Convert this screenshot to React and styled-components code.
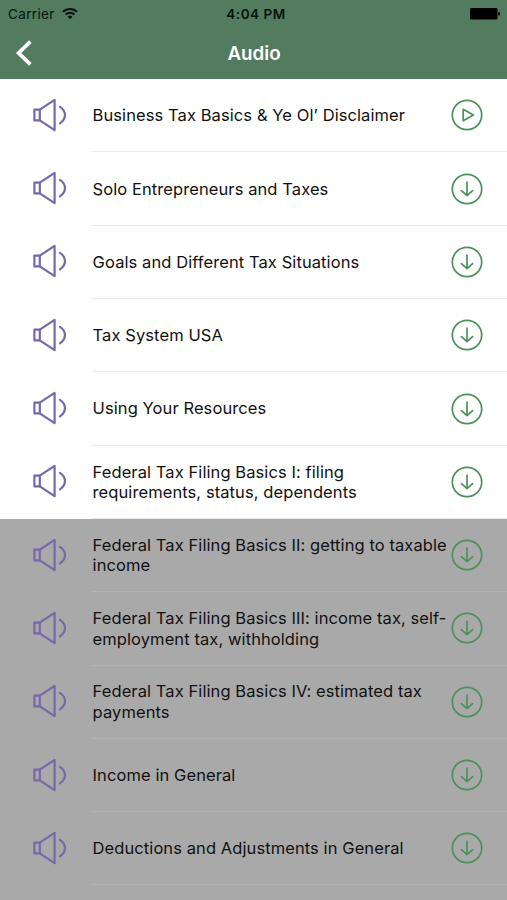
import styled, { createGlobalStyle } from "styled-components";

const GlobalStyle = createGlobalStyle`
  * {
    box-sizing: border-box;
  }

  body {
    margin: 0;
    background: #fff;
    font-family: Inter, "Liberation Sans", sans-serif;
    overflow: hidden;
  }
`;

const Screen = styled.div`
  width: 507px;
  height: 900px;
  overflow: hidden;
`;

const Header = styled.header`
  height: 79.2px;
  background: #527b5f;
`;

const StatusBar = styled.div`
  display: grid;
  grid-template-columns: 1fr auto 1fr;
  align-items: center;
  height: 27px;
  padding: 0 7px 0 8px;
  color: #07140c;
  font-size: 13.5px;
`;

const Carrier = styled.div`
  display: flex;
  align-items: center;
  gap: 7px;
  letter-spacing: 0.35px;
`;

const Clock = styled.div`
  padding-left: 4px;
  font-weight: 600;
  letter-spacing: 0.5px;
`;

const Battery = styled.svg`
  justify-self: end;
`;

const NavBar = styled.div`
  display: grid;
  grid-template-columns: 61px 1fr 60px;
  align-items: center;
  height: 52px;
`;

const BackButton = styled.button`
  display: flex;
  padding: 0 0 0 15px;
  border: 0;
  background: none;
`;

const Title = styled.h1`
  margin: 0;
  color: #fff;
  font-size: 18.8px;
  font-weight: 600;
  text-align: center;
`;

const List = styled.ul`
  margin: 0;
  padding: 0;
  list-style: none;
`;

const Row = styled.li`
  display: flex;
  height: 73.3px;
  padding-left: 32px;
  background: ${(p) => (p.$dimmed ? "#a9a9a9" : "#fff")};
`;

const SpeakerCell = styled.div`
  display: flex;
  align-items: center;
  width: 60px;
  flex-shrink: 0;
  padding-bottom: 2px;
`;

const Content = styled.div`
  display: flex;
  align-items: center;
  flex-grow: 1;
  padding-right: 23px;
  border-bottom: 1px solid ${(p) => (p.$dimmed ? "#b2b2b2" : "#e9e9e9")};
`;

const Name = styled.div`
  width: 359px;
  flex-shrink: 0;
  padding-top: 0.3px;
  padding-left: 0.6px;
  color: #111;
  font-size: 16.5px;
  letter-spacing: 0.085px;
  line-height: 20.4px;
  white-space: pre;
`;

const tracks = [
  { name: "Business Tax Basics & Ye Ol’ Disclaimer", downloaded: true },
  { name: "Solo Entrepreneurs and Taxes" },
  { name: "Goals and Different Tax Situations" },
  { name: "Tax System USA" },
  { name: "Using Your Resources" },
  { name: "Federal Tax Filing Basics I: filing\nrequirements, status, dependents" },
  { name: "Federal Tax Filing Basics II: getting to taxable\nincome", dimmed: true },
  { name: "Federal Tax Filing Basics III: income tax, self-\nemployment tax, withholding", dimmed: true },
  { name: "Federal Tax Filing Basics IV: estimated tax\npayments", dimmed: true },
  { name: "Income in General", dimmed: true },
  { name: "Deductions and Adjustments in General", dimmed: true },
  { name: "", dimmed: true, empty: true },
];

function WifiIcon() {
  return (
    <svg width="16" height="12" viewBox="0 0 16 12" fill="none" stroke="#07140c" strokeWidth="1.9">
      <path d="M1 3.8a10 10 0 0 1 14 0" />
      <path d="M3.6 6.5a6.3 6.3 0 0 1 8.8 0" />
      <path d="M8 11.1 5.6 8.7a3.5 3.5 0 0 1 4.8 0z" fill="#07140c" stroke="none" />
    </svg>
  );
}

function SpeakerIcon({ dimmed }) {
  return (
    <svg
      width="36"
      height="36"
      viewBox="0 0 36 36"
      fill="none"
      stroke={dimmed ? "#7768a8" : "#7668ad"}
      strokeWidth="2.2"
      strokeLinejoin="round"
      strokeLinecap="round"
    >
      <path d="M2.4 12.6H7.8V23.4H2.4z" />
      <path d="M7.8 12.6 22.6 2.8V33.2L7.8 23.4" />
      <path d="M28 9.8c6.6 4.4 6.6 12.2 0 16.6" />
    </svg>
  );
}

function ActionIcon({ downloaded }) {
  return (
    <svg
      width="32"
      height="32"
      viewBox="0 0 32 32"
      fill="none"
      stroke="#4b915a"
      strokeWidth="1.7"
      strokeLinejoin="round"
      strokeLinecap="round"
    >
      <circle cx="16" cy="16" r="14.7" />
      {downloaded ? (
        <path d="M12.2 10.2V21.8L22.4 16z" />
      ) : (
        <path d="M16 9V22.6M10.4 17.6 16 22.6 21.6 17.6" />
      )}
    </svg>
  );
}

export default function App() {
  return (
    <Screen>
      <GlobalStyle />
      <Header>
        <StatusBar>
          <Carrier>
            Carrier
            <WifiIcon />
          </Carrier>
          <Clock>4:04 PM</Clock>
          <Battery width="30" height="12" viewBox="0 0 30 12">
            <rect width="27.5" height="11.5" rx="1.5" />
            <rect x="28" y="4" width="2" height="3.6" rx="1" />
          </Battery>
        </StatusBar>
        <NavBar>
          <BackButton aria-label="Back">
            <svg width="18" height="26" viewBox="0 0 18 26" fill="none" stroke="#fff" strokeWidth="3.8">
              <path d="M15.4 1.6 3.6 13 15.4 24.4" />
            </svg>
          </BackButton>
          <Title>Audio</Title>
        </NavBar>
      </Header>
      <List>
        {tracks.map((track, key) => (
          <Row key={key} $dimmed={track.dimmed}>
            <SpeakerCell>{!track.empty && <SpeakerIcon dimmed={track.dimmed} />}</SpeakerCell>
            <Content $dimmed={track.dimmed}>
              <Name>{track.name}</Name>
              {!track.empty && <ActionIcon downloaded={track.downloaded} />}
            </Content>
          </Row>
        ))}
      </List>
    </Screen>
  );
}
